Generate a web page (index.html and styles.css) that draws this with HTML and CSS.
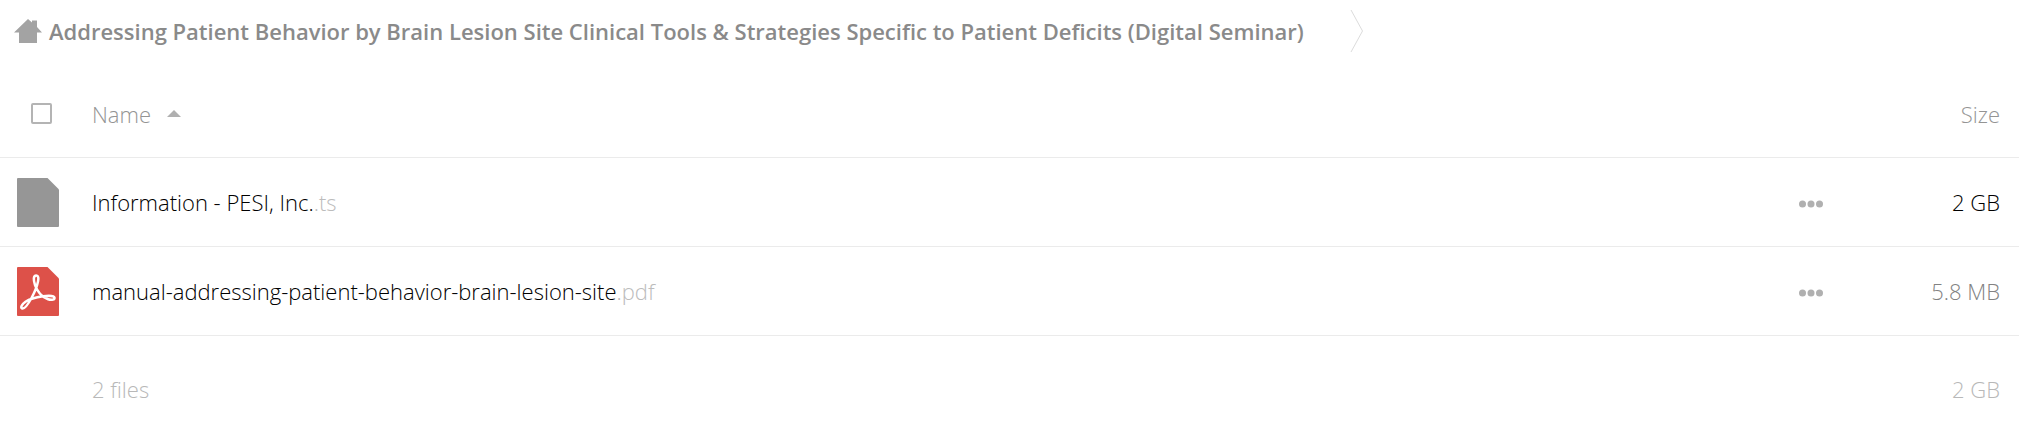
FILE: index.html
```html
<!DOCTYPE html>
<html lang="en">
<head>
  <meta charset="UTF-8">
  <meta name="viewport" content="width=device-width, initial-scale=1.0">
  <title>Files</title>
  <link rel="stylesheet" href="styles.css">
</head>
<body>
  <nav class="breadcrumb">
    <a href="#" class="home" aria-label="Home">
      <svg width="28" height="24" viewBox="0 0 28 24" fill="#a3a3a3">
        <path d="M14 0 L18 3.4 V1.5 H23 V8 L28 13.5 H23 V24 H5 V13.5 H0 Z"/>
      </svg>
    </a>
    <a href="#" class="crumb">Addressing Patient Behavior by Brain Lesion Site Clinical Tools &amp; Strategies Specific to Patient Deficits (Digital Seminar)</a>
    <svg class="separator" width="14" height="44" viewBox="0 0 14 44" fill="none" stroke="#dcdcdc">
      <path d="M1 1 L12.5 22 L1 43"/>
    </svg>
  </nav>

  <table class="files">
    <thead>
      <tr>
        <th class="col-icon"><input type="checkbox" class="select-all" aria-label="Select all"></th>
        <th class="col-name">
          <button class="sort">Name
            <svg width="14" height="7" viewBox="0 0 14 7" fill="#b0b0b0"><path d="M7 0 L14 7 H0 Z"/></svg>
          </button>
        </th>
        <th class="col-actions"></th>
        <th class="col-size"><button class="sort">Size</button></th>
      </tr>
    </thead>
    <tbody>
      <tr>
        <td class="col-icon">
          <svg class="file-icon" width="42" height="49" viewBox="0 0 42 49">
            <path fill="#969696" d="M1 0 H30.500 L42 11.500 V48 Q42 49 41 49 H1 Q0 49 0 48 V1 Q0 0 1 0 Z"/>
          </svg>
        </td>
        <td class="col-name"><a href="#">Information - PESI, Inc.<span class="ext">.ts</span></a></td>
        <td class="col-actions">
          <button class="more" aria-label="Actions">
            <svg width="24" height="8" viewBox="0 0 24 8" fill="#b0b0b0"><circle cx="3.500" cy="4" r="3.500"/><circle cx="12" cy="4" r="3.500"/><circle cx="20.500" cy="4" r="3.500"/></svg>
          </button>
        </td>
        <td class="col-size">2 GB</td>
      </tr>
      <tr>
        <td class="col-icon">
          <svg class="file-icon" width="42" height="49" viewBox="0 0 42 49">
            <path fill="#dd5149" d="M1 0 H30.500 L42 11.500 V48 Q42 49 41 49 H1 Q0 49 0 48 V1 Q0 0 1 0 Z"/>
            <path fill="none" stroke="#fff" stroke-width="2.500" stroke-linejoin="round" d="M19.300 8.500 C16.200 8.500 16.300 13 18 18 C20 24 25 30.500 31 32.300 C35 33.500 37.700 32.500 37.500 30.800 C37.200 28.700 31 28.600 26 29.300 C19.500 30.300 13 31.800 8.500 34.700 C4.500 37.500 3.500 40.500 5 41.400 C7.500 42.700 11.500 36.500 14.500 31 C17.500 25.500 20 19.500 21 14.500 C21.700 11 21.500 8.500 19.300 8.500 Z"/>
          </svg>
        </td>
        <td class="col-name"><a href="#">manual-addressing-patient-behavior-brain-lesion-site<span class="ext">.pdf</span></a></td>
        <td class="col-actions">
          <button class="more" aria-label="Actions">
            <svg width="24" height="8" viewBox="0 0 24 8" fill="#b0b0b0"><circle cx="3.500" cy="4" r="3.500"/><circle cx="12" cy="4" r="3.500"/><circle cx="20.500" cy="4" r="3.500"/></svg>
          </button>
        </td>
        <td class="col-size small">5.8 MB</td>
      </tr>
    </tbody>
    <tfoot>
      <tr>
        <td class="col-icon"></td>
        <td class="col-name">2 files</td>
        <td class="col-actions"></td>
        <td class="col-size">2 GB</td>
      </tr>
    </tfoot>
  </table>
</body>
</html>
```
FILE: styles.css
```css
* {
  box-sizing: border-box;
  margin: 0;
  padding: 0;
}

body {
  background: #fff;
  color: #000;
  font-family: 'Open Sans', sans-serif;
  font-size: 22px;
  font-weight: 300;
  line-height: 30px;
}

a {
  color: inherit;
  text-decoration: none;
}

svg {
  display: block;
}

button {
  border: none;
  background: none;
  color: inherit;
  font: inherit;
  cursor: pointer;
}

.breadcrumb {
  display: flex;
  align-items: center;
  height: 68px;
  padding: 0 14px 6px;
}

.crumb {
  margin-left: 7px;
  color: #8a8a8a;
  font-weight: 600;
  white-space: nowrap;
}

.separator {
  margin-left: 46px;
}

.files {
  width: 100%;
  border-collapse: separate;
  border-spacing: 0;
}

.files th,
.files td {
  height: 90px;
  border-bottom: 1px solid #ebebeb;
  font-weight: 300;
  text-align: left;
  vertical-align: middle;
}

.files th {
  padding-top: 2px;
  color: #949494;
}

.files tbody td {
  height: 89px;
}

.files .col-icon {
  width: 92px;
  padding-left: 17px;
}

.files .col-actions {
  width: 60px;
  padding-top: 4px;
}

.files .col-size {
  width: 160px;
  padding-right: 19px;
  text-align: right;
}

.files .small {
  color: #828282;
}

.select-all {
  display: block;
  appearance: none;
  width: 21px;
  height: 21px;
  margin-left: 14px;
  border: 2px solid #b4b4b4;
  border-radius: 2px;
}

.sort {
  display: inline-flex;
  align-items: center;
  gap: 16px;
}

.more {
  display: block;
  padding: 4px 0;
}

.ext {
  color: #bcbcbc;
}

.files tfoot td {
  height: 105px;
  border-bottom: none;
  color: #b8b8b8;
}
```
